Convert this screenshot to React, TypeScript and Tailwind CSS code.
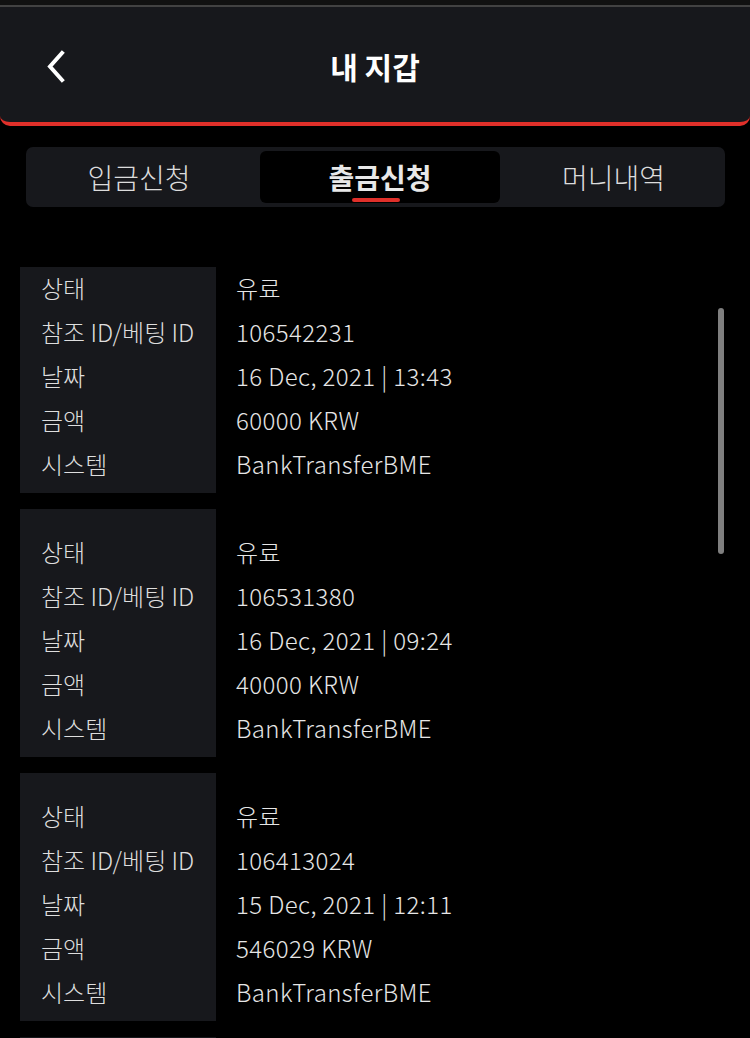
import React from "react";

const cards = [
  { id: "106542231", date: "16 Dec, 2021 | 13:43", amount: "60000 KRW" },
  { id: "106531380", date: "16 Dec, 2021 | 09:24", amount: "40000 KRW" },
  { id: "106413024", date: "15 Dec, 2021 | 12:11", amount: "546029 KRW" },
  { id: "106400000", date: "15 Dec, 2021 | 10:02", amount: "50000 KRW" },
];

function Card({ id, date, amount }: { id: string; date: string; amount: string }) {
  const rows: [string, string][] = [
    ["상태", "유료"],
    ["참조 ID/베팅 ID", id],
    ["날짜", date],
    ["금액", amount],
    ["시스템", "BankTransferBME"],
  ];
  return (
    <div className="flex">
      <div className="w-[196px] bg-[#17181c] pt-[21px] pb-[7px] pl-[21px]">
        {rows.map(([l]) => (
          <div key={l} className="h-[44px] leading-[44px] text-[#dedede]">{l}</div>
        ))}
      </div>
      <div className="flex-1 pt-[21px] pb-[7px] pl-[20px]">
        {rows.map(([l, v]) => (
          <div key={l} className="h-[44px] leading-[44px] text-[#e6e6e6] tracking-[0.4px]">{v}</div>
        ))}
      </div>
    </div>
  );
}

export default function App() {
  return (
    <div
      className="w-[750px] h-[1038px] bg-black overflow-hidden relative"
      style={{ fontFamily: '"Noto Sans CJK KR", "Noto Sans", sans-serif' }}
    >
      <div className="h-[5px] bg-[#111111]" />
      <div className="h-[2px] bg-[#424242]" />
      <div className="h-[119px] bg-[#17181c] rounded-b-[10px] border-b-[4px] border-[#e0302a] flex items-center justify-center relative">
        <svg className="absolute left-[42px] top-[41px]" width="26" height="36" viewBox="0 0 26 36">
          <polyline points="20,5 8,18.5 20,32" fill="none" stroke="#ffffff" strokeWidth="4" strokeLinecap="square" />
        </svg>
        <div className="text-white text-[30px] font-bold mt-[4px]">내 지갑</div>
      </div>
      <div className="mt-[21px] ml-[26px] w-[699px] h-[60px] bg-[#17181c] rounded-[7px] flex items-center pl-[4px] pr-[4px]">
        <div className="w-[230px] text-center text-[28px] font-light text-[#dcdcdc] pr-[12px]">입금신청</div>
        <div className="w-[240px] h-[52px] bg-black rounded-[6px] relative flex items-center justify-center">
          <div className="text-[28px] font-bold text-[#e8e8e8]">출금신청</div>
          <div className="absolute left-[92px] bottom-[1px] w-[48px] h-[4px] rounded-full bg-[#e0302a]" />
        </div>
        <div className="flex-1 text-center text-[28px] font-light text-[#dcdcdc] pl-[6px]">머니내역</div>
      </div>
      <div className="absolute left-[20px] right-0 top-[267px] bottom-0 overflow-hidden text-[24px] font-light">
        <div className="-mt-[22px] flex flex-col gap-[16px]">
          {cards.map((c) => (
            <Card key={c.id} {...c} />
          ))}
        </div>
      </div>
      <div className="absolute left-[718px] top-[308px] w-[6px] h-[246px] rounded-full bg-[#7f7f7f]" />
    </div>
  );
}
